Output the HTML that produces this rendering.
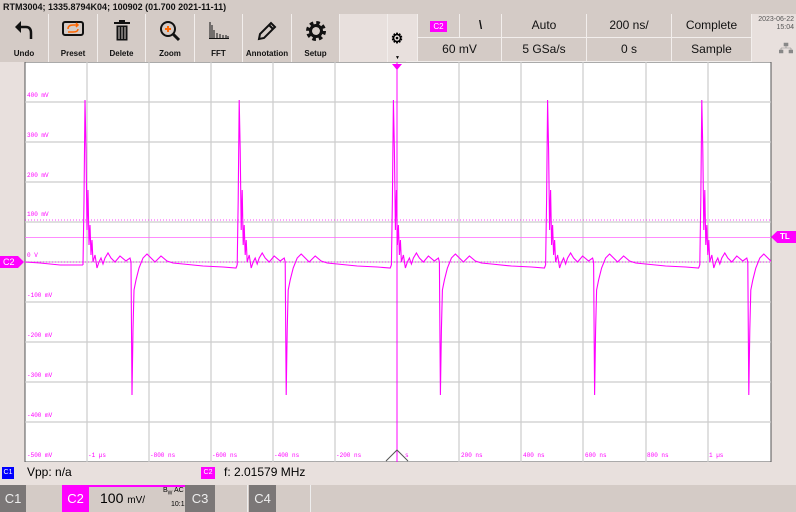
<!DOCTYPE html>
<html><head><meta charset="utf-8"><style>
*{margin:0;padding:0;box-sizing:border-box}
body{width:796px;height:512px;overflow:hidden;background:#e8e0dd;font-family:"Liberation Sans",sans-serif;position:relative}
.abs{position:absolute}
.title{left:0;top:0;width:796px;height:14px;background:#d4cbc6;font-size:9px;font-weight:bold;padding:2px 3px;color:#111}
.btn{top:14px;height:48px;background:#d4cbc6;border-right:1px solid #f2eeec;text-align:center;font-size:8px;font-weight:bold;color:#111}
.btn span{position:absolute;left:0;right:0;bottom:4px}
.btn svg{position:absolute;left:50%;top:6px;transform:translateX(-50%)}
.cell{background:#d4cbc6;border-right:1px solid #f2eeec;border-bottom:1px solid #f2eeec;font-size:12px;text-align:center;line-height:23px;color:#111}
</style></head><body>
<div class="abs title">RTM3004; 1335.8794K04; 100902 (01.700 2021-11-11)</div>
<div class="abs btn" style="left:0;width:49px"><svg width="20" height="20" viewBox="0 0 20 20"><path d="M5 7 H12 Q17 7 17 13 V19" fill="none" stroke="#111" stroke-width="2.5"/><path d="M1 7 L7 1 L7 13 Z" fill="#111"/></svg><span>Undo</span></div>
<div class="abs btn" style="left:49px;width:49px"><svg width="22" height="18" viewBox="0 0 22 18"><rect x="1" y="2" width="20" height="13" rx="2" fill="none" stroke="#111" stroke-width="2"/><path d="M6 9 Q6 5 11 5 H16 M14 3 L16 5 L14 7 M16 9 Q16 12 11 12 H6" fill="none" stroke="#f60" stroke-width="1.5"/></svg><span>Preset</span></div>
<div class="abs btn" style="left:98px;width:48px"><svg width="18" height="22" viewBox="0 0 18 22"><rect x="1" y="2" width="16" height="2" fill="#111"/><rect x="6" y="0" width="6" height="2" fill="#111"/><path d="M3 5 H15 V21 H3 Z M6 7 V19 M9 7 V19 M12 7 V19" fill="#111" stroke="#d4cbc6" stroke-width="1"/></svg><span>Delete</span></div>
<div class="abs btn" style="left:146px;width:49px"><svg width="22" height="22" viewBox="0 0 22 22"><circle cx="9" cy="9" r="7" fill="none" stroke="#111" stroke-width="2"/><path d="M6 9 H12 M9 6 V12" stroke="#f60" stroke-width="2"/><path d="M14 14 L20 20" stroke="#111" stroke-width="3"/></svg><span>Zoom</span></div>
<div class="abs btn" style="left:195px;width:48px"><svg width="22" height="20" viewBox="0 0 22 20"><path d="M2 2 V18 M4 5 V18 M6 10 V18 M9 13 V18 M12 14 V18 M15 15 V18 M18 15 V18 M20 16 V18 M1 18.5 H21" stroke="#111" stroke-width="1"/></svg><span>FFT</span></div>
<div class="abs btn" style="left:243px;width:49px"><svg width="22" height="22" viewBox="0 0 22 22"><path d="M3 19 L4 14 L15 3 L19 7 L8 18 Z" fill="none" stroke="#111" stroke-width="2"/><path d="M13 5 L17 9" stroke="#111" stroke-width="2"/></svg><span>Annotation</span></div>
<div class="abs btn" style="left:292px;width:48px"><svg width="22" height="22" viewBox="0 0 22 22"><circle cx="11" cy="11" r="7" fill="none" stroke="#111" stroke-width="6" stroke-dasharray="3 2.5"/><circle cx="11" cy="11" r="5.5" fill="none" stroke="#111" stroke-width="3"/></svg><span>Setup</span></div>
<div class="abs btn" style="left:340px;width:48px;background:#e8e0dd"></div>
<div class="abs" style="left:388px;top:14px;width:18px;height:48px;background:#e8e0dd;font-size:14px;text-align:center;line-height:48px;font-weight:bold">⚙</div>
<div class="abs" style="left:395px;top:55px;font-size:5px">▼</div>
<div class="abs cell" style="left:406px;top:14px;width:12px;height:48px;background:#e8e0dd"></div>
<div class="abs cell" style="left:418px;top:14px;width:42px;height:24px"><span style="background:#f0f;color:#fff;font-size:8px;padding:1px 3px">C2</span></div>
<div class="abs cell" style="left:460px;top:14px;width:42px;height:24px;font-weight:bold">\</div>
<div class="abs cell" style="left:502px;top:14px;width:85px;height:24px">Auto</div>
<div class="abs cell" style="left:587px;top:14px;width:85px;height:24px">200 ns/</div>
<div class="abs cell" style="left:672px;top:14px;width:80px;height:24px">Complete</div>
<div class="abs cell" style="left:418px;top:38px;width:84px;height:24px">60 mV</div>
<div class="abs cell" style="left:502px;top:38px;width:85px;height:24px">5 GSa/s</div>
<div class="abs cell" style="left:587px;top:38px;width:85px;height:24px">0 s</div>
<div class="abs cell" style="left:672px;top:38px;width:80px;height:24px">Sample</div>
<div class="abs" style="left:752px;top:14px;width:44px;height:48px;background:#e8e0dd;font-size:7px;color:#555;text-align:right;padding:2px 2px;line-height:8px;white-space:nowrap">2023-06-22<br>15:04</div>
<svg class="abs" style="left:779px;top:42px" width="14" height="12"><path d="M5 1 H9 V4 H5Z M7 4 V6 M2 6 H12 M2 6 V8 M12 6 V8 M0 8 H4 V11 H0Z M10 8 H14 V11 H10Z" fill="#888" stroke="#888" stroke-width="0.6"/></svg>

<svg class="abs" style="left:0;top:62px" width="796" height="400" viewBox="0 62 796 400">
<rect x="25" y="62" width="746" height="400" fill="#fff" stroke="#555" stroke-width="1"/>
<g stroke="#ccc" stroke-width="1.2">
<path d="M87 62V462M149 62V462M211 62V462M273 62V462M335 62V462M459 62V462M521 62V462M583 62V462M646 62V462M708 62V462"/>
<path d="M25 102H771M25 142H771M25 182H771M25 222H771M25 262H771M25 302H771M25 342H771M25 382H771M25 422H771"/>
</g>
<g stroke="#f0f" stroke-width="0.7" stroke-dasharray="1 2"><path d="M25 220H771M25 262H771"/></g>
<path d="M25 237.5H771" stroke="#f6f" stroke-width="0.8"/>
<path d="M397 62V462" stroke="#f0f" stroke-width="1"/>
<path d="M392 64H402L397 70Z" fill="#f0f"/>
<path d="M386 461 L397 450 L408 461" fill="none" stroke="#555" stroke-width="1"/>
<defs><path id="p" d="M0 265L1 200L2 100L3 150L4 230L5 190L6 245L7 225L8 255L9 240L10 262L12 255L14 268L16 262L18 258L20 264L22 258L25 253L28 258L32 262L37 256L43 261L47 258L48 262L48.5 330L49 395L50 330L51 290L53 280L56 268L60 258L64 254L68 258L72 262L78 256L84 261L90 263L100 264L120 266L140 267L153 268L154.2 265" fill="none" stroke="#f0f" stroke-width="1.1"/></defs>
<path d="M25 262L40 263L60 265L83 265" fill="none" stroke="#f0f" stroke-width="1.1"/>
<use href="#p" x="83"/><use href="#p" x="237.2"/><use href="#p" x="391.4"/><use href="#p" x="545.6"/>
<svg x="0" y="62" width="771" height="400" viewBox="0 62 771 400" overflow="hidden"><use href="#p" x="699.8"/></svg>
<g font-family="Liberation Mono,monospace" font-size="6" fill="#f0f">
<text x="27" y="97">400 mV</text><text x="27" y="137">300 mV</text><text x="27" y="177">200 mV</text><text x="27" y="216">100 mV</text><text x="27" y="257">0 V</text><text x="27" y="297">-100 mV</text><text x="27" y="337">-200 mV</text><text x="27" y="377">-300 mV</text><text x="27" y="417">-400 mV</text><text x="27" y="457">-500 mV</text>
<text x="88" y="457">-1 µs</text><text x="150" y="457">-800 ns</text><text x="212" y="457">-600 ns</text><text x="274" y="457">-400 ns</text><text x="336" y="457">-200 ns</text><text x="405" y="457">s</text><text x="461" y="457">200 ns</text><text x="523" y="457">400 ns</text><text x="585" y="457">600 ns</text><text x="647" y="457">800 ns</text><text x="709" y="457">1 µs</text>
</g>
</svg>
<div class="abs" style="left:0;top:256px;width:24px;height:12px;background:#f0f;color:#fff;font-size:9px;line-height:12px;padding-left:3px;clip-path:polygon(0 0,75% 0,100% 50%,75% 100%,0 100%)">C2</div>
<div class="abs" style="left:771px;top:231px;width:25px;height:12px;background:#f0f;color:#fff;font-size:8px;font-weight:bold;line-height:12px;padding-left:9px;clip-path:polygon(25% 0,100% 0,100% 100%,25% 100%,0 50%)">TL</div>

<div class="abs" style="left:2px;top:467px;width:12px;height:12px;background:#00f;color:#fff;font-size:7px;text-align:center;line-height:12px">C1</div>
<div class="abs" style="left:27px;top:465px;font-size:12px">Vpp: n/a</div>
<div class="abs" style="left:201px;top:467px;width:14px;height:12px;background:#f0f;color:#fff;font-size:7px;text-align:center;line-height:12px">C2</div>
<div class="abs" style="left:224px;top:465px;font-size:12px">f: 2.01579 MHz</div>
<div class="abs" style="left:0;top:485px;width:796px;height:27px;background:#d4cbc6"></div>
<div class="abs" style="left:0;top:485px;width:26px;height:27px;background:#7b7777;color:#eee;font-size:13px;text-align:center;line-height:27px">C1</div>
<div class="abs" style="left:62px;top:485px;width:123px;height:27px;background:#d4cbc6;border-top:2px solid #f0f"></div>
<div class="abs" style="left:62px;top:485px;width:27px;height:27px;background:#f0f;color:#fff;font-size:13px;text-align:center;line-height:27px">C2</div>
<div class="abs" style="left:100px;top:490px;font-size:14px">100 <span style="font-size:10px">mV/</span></div>
<div class="abs" style="left:163px;top:487px;font-size:7px">B<sub style="font-size:5px">W</sub> AC</div>
<div class="abs" style="left:171px;top:501px;font-size:7px">10:1</div>
<div class="abs" style="left:185px;top:485px;width:30px;height:27px;background:#7b7777;color:#eee;font-size:13px;text-align:center;line-height:27px">C3</div>
<div class="abs" style="left:215px;top:485px;width:33px;height:27px;border-right:1px solid #eee"></div>
<div class="abs" style="left:249px;top:485px;width:27px;height:27px;background:#7b7777;color:#eee;font-size:13px;text-align:center;line-height:27px">C4</div>
<div class="abs" style="left:276px;top:485px;width:35px;height:27px;border-right:1px solid #eee"></div>
</body></html>
